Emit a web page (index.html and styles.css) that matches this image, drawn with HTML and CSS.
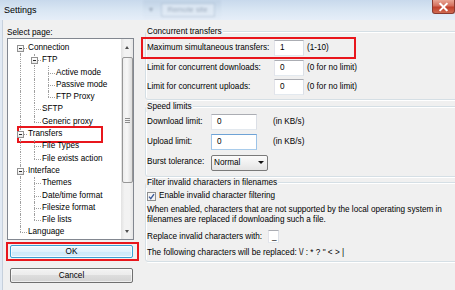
FILE: index.html
```html
<!DOCTYPE html>
<html>
<head>
<meta charset="utf-8">
<link rel="stylesheet" href="styles.css">
</head>
<body>
<div class="titlebar">
  <span class="title">Settings</span>
  <div class="ghost"><span class="gsep">▾</span><span class="gtab">Remote site</span></div>
  <div class="close"><svg width="23" height="14" viewBox="0 0 23 14"><path d="M8 3.5 L15 10.5 M15 3.5 L8 10.5" stroke="#fff" stroke-width="2.2" stroke-linecap="square"/></svg></div>
</div>
<div class="main">
  <div class="left">
    <div class="sel-label">Select page:</div>
    <div class="tree">
      <div class="rows">
        <div class="row"><i class="c f"><b class="box"></b></i><span class="tx">Connection</span></div>
        <div class="row"><i class="c v"></i><i class="c m"><b class="box"></b></i><span class="tx">FTP</span></div>
        <div class="row"><i class="c v"></i><i class="c v"></i><i class="c t"></i><span class="tx">Active mode</span></div>
        <div class="row"><i class="c v"></i><i class="c v"></i><i class="c t"></i><span class="tx">Passive mode</span></div>
        <div class="row"><i class="c v"></i><i class="c v"></i><i class="c l"></i><span class="tx">FTP Proxy</span></div>
        <div class="row"><i class="c v"></i><i class="c t"></i><span class="tx">SFTP</span></div>
        <div class="row"><i class="c v"></i><i class="c l"></i><span class="tx">Generic proxy</span></div>
        <div class="row"><i class="c m"><b class="box"></b></i><span class="tx">Transfers</span><span class="mark mark-tree"></span></div>
        <div class="row"><i class="c v"></i><i class="c t"></i><span class="tx">File Types</span></div>
        <div class="row"><i class="c v"></i><i class="c l"></i><span class="tx">File exists action</span></div>
        <div class="row"><i class="c m"><b class="box"></b></i><span class="tx">Interface</span></div>
        <div class="row"><i class="c v"></i><i class="c t"></i><span class="tx">Themes</span></div>
        <div class="row"><i class="c v"></i><i class="c t"></i><span class="tx">Date/time format</span></div>
        <div class="row"><i class="c v"></i><i class="c t"></i><span class="tx">Filesize format</span></div>
        <div class="row"><i class="c v"></i><i class="c l"></i><span class="tx">File lists</span></div>
        <div class="row"><i class="c l"></i><span class="tx">Language</span></div>
      </div>
      <div class="sb">
        <div class="sb-btn"><span class="tri-up"></span></div>
        <div class="track"><div class="thumb"><span class="grip"></span></div></div>
        <div class="sb-btn sb-down"><span class="tri-down"></span></div>
      </div>
    </div>
    <div class="okwrap"><div class="btn ok">OK</div></div>
    <div class="btn cancel">Cancel</div>
  </div>

  <div class="right">
    <div class="grp g1">
      <div class="legend">Concurrent transfers</div>
      <div class="frows">
        <div class="frow"><span class="lab">Maximum simultaneous transfers:</span><span class="inp w30">1</span><span class="note">(1-10)</span><span class="mark mark-row"></span></div>
        <div class="frow"><span class="lab">Limit for concurrent downloads:</span><span class="inp w30">0</span><span class="note">(0 for no limit)</span></div>
        <div class="frow"><span class="lab">Limit for concurrent uploads:</span><span class="inp w30">0</span><span class="note">(0 for no limit)</span></div>
      </div>
    </div>

    <div class="grp g2">
      <div class="legend">Speed limits</div>
      <div class="frows">
        <div class="frow"><span class="lab">Download limit:</span><span class="inp w46">0</span><span class="note">(in KB/s)</span></div>
        <div class="frow"><span class="lab">Upload limit:</span><span class="inp w46 focus">0</span><span class="note">(in KB/s)</span></div>
        <div class="frow"><span class="lab">Burst tolerance:</span><span class="sel"><span>Normal</span><span class="tri-down dark"></span></span></div>
      </div>
    </div>

    <div class="grp g3">
      <div class="legend">Filter invalid characters in filenames</div>
      <div class="chkrow">
        <svg class="chk" width="9" height="9" viewBox="0 0 9 9"><rect x="0.5" y="0.5" width="8" height="8" fill="#f4f4f4" stroke="#8e8f8f"/><path d="M2 4.6 L3.8 6.6 L7 2.2" fill="none" stroke="#3b5a9a" stroke-width="1.4"/></svg>
        <span class="chklab">Enable invalid character filtering</span>
      </div>
      <p class="para">When enabled, characters that are not supported by the local operating system in<br>filenames are replaced if downloading such a file.</p>
      <div class="reprow"><span class="lab3">Replace invalid characters with:</span><span class="inp small">_</span></div>
      <div class="lastline">The following characters will be replaced: \/ : * ? " &lt; &gt; |</div>
    </div>
  </div>
</div>
</body>
</html>
```

FILE: styles.css
```css
* { box-sizing: border-box; }
html, body { margin: 0; padding: 0; }
body {
  width: 455px;
  height: 290px;
  overflow: hidden;
  background: #f0f0f0;
  font-family: "Liberation Sans", Arial, sans-serif;
  font-size: 8.2px;
  line-height: 10px;
  color: #000;
}

/* title bar */
.titlebar {
  height: 20px;
  display: flex;
  align-items: center;
  background: linear-gradient(#c8d9ec, #d9e6f3 50%, #e6eef8);
}
.title { font-size: 9px; margin-left: 4px; }
.ghost {
  margin-left: 106px;
  align-self: stretch;
  display: flex;
  align-items: center;
  gap: 8px;
  padding: 0 6px;
  color: #6a7a90;
  font-size: 7.5px;
  opacity: 0.55;
  filter: blur(0.9px);
  background: linear-gradient(#b8cbe0, #d6e3f1 60%, transparent);
}
.gtab {
  border: 1px solid #9fb2c8;
  padding: 1px 6px;
  background: #e2ebf5;
}
.close {
  margin-left: auto;
  align-self: flex-start;
  width: 23px;
  height: 14px;
  border: 1px solid #8a3a30;
  border-top: none;
  border-radius: 0 0 3px 3px;
  background: linear-gradient(#e9a695, #d4705e 45%, #c0402c 55%, #d06a50);
  display: flex;
  align-items: center;
  justify-content: center;
}
.close svg { display: block; }

/* main */
.main {
  display: flex;
  height: 270px;
  box-shadow: inset 2px 0 0 #e2eaf4, inset 3px 0 0 #c6d0dc;
}
.left {
  width: 140px;
  flex: none;
  padding-left: 7px;
  display: flex;
  flex-direction: column;
}
.sel-label { margin-top: 8px; height: 10px; }

.tree {
  width: 127px;
  height: 202px;
  border: 1px solid #828790;
  background: #fff;
  display: flex;
}
.rows {
  flex: 1;
  padding: 2.8px 0 0 5px;
}
.row {
  height: 12.3px;
  display: flex;
  position: relative;
  white-space: nowrap;
}
.tx { margin-left: 1px; align-self: center; line-height: 10px; }

.c { width: 14px; flex: none; position: relative; }
.c::before, .c::after { content: ""; position: absolute; }
.c.v::before, .c.t::before, .c.m::before {
  left: 7px; top: 0; bottom: 0; border-left: 1px dotted #a0a0a0;
}
.c.l::before { left: 7px; top: 0; height: 50%; border-left: 1px dotted #a0a0a0; }
.c.f::before { left: 7px; top: 50%; bottom: 0; border-left: 1px dotted #a0a0a0; }
.c.t::after, .c.l::after, .c.f::after, .c.m::after {
  left: 7px; right: 0; top: 50%; border-top: 1px dotted #a0a0a0;
}
.box {
  position: absolute;
  left: 4px;
  top: calc(50% - 3px);
  width: 7px;
  height: 7px;
  border: 1px solid #919191;
  background: linear-gradient(#ffffff, #e9e9e9);
  z-index: 1;
}
.box::after {
  content: "";
  position: absolute;
  left: 1px; right: 1px; top: 2px;
  height: 1px;
  background: #2a2a2a;
}

.mark { position: absolute; border: 2px solid #e8161c; pointer-events: none; }
.mark-tree { left: 4px; top: -2px; width: 86px; height: 17px; }
.mark-row { left: -6px; top: -3px; width: 215px; height: 22px; }

/* scrollbar */
.sb {
  width: 12px;
  flex: none;
  display: flex;
  flex-direction: column;
  background: linear-gradient(to right, #e2e2e2, #f2f2f2 30%, #f2f2f2 70%, #e6e6e6);
}
.sb-btn { height: 17px; display: flex; align-items: center; justify-content: center; }
.sb-down { height: 15px; }
.tri-up {
  width: 0; height: 0;
  border-left: 2.5px solid transparent;
  border-right: 2.5px solid transparent;
  border-bottom: 3px solid #505050;
}
.tri-down {
  width: 0; height: 0;
  border-left: 2.5px solid transparent;
  border-right: 2.5px solid transparent;
  border-top: 3px solid #505050;
}
.track { flex: 1; display: flex; flex-direction: column; }
.thumb {
  margin: 1px 0.5px 0;
  height: 126px;
  border: 1px solid #979797;
  border-radius: 2px;
  background: linear-gradient(to right, #ededed, #f7f7f7 45%, #dcdcdc);
  display: flex;
  align-items: center;
  justify-content: center;
}
.grip {
  width: 5px;
  height: 5px;
  background: repeating-linear-gradient(#8c8c8c 0 1px, transparent 1px 2px);
}

/* buttons */
.okwrap {
  margin-top: 2px;
  margin-left: -1px;
  width: 133px;
  height: 19px;
  border: 2px solid #e8161c;
  padding: 1px 0 0 2px;
}
.btn {
  display: flex;
  align-items: center;
  justify-content: center;
  border-radius: 2px;
}
.ok {
  width: 123px;
  height: 13px;
  border: 1px solid #3b9fd3;
  background: linear-gradient(#eef8fe, #dff1fc 50%, #cbe8f9 50%, #d6edfa);
  box-shadow: inset 0 0 0 1px rgba(255,255,255,0.7);
}
.cancel {
  margin-top: 7px;
  margin-left: 3px;
  width: 123px;
  height: 15px;
  border: 1px solid #707070;
  background: linear-gradient(#f3f3f3, #ebebeb 50%, #dddddd 50%, #d3d3d3);
  box-shadow: inset 0 0 0 1px rgba(255,255,255,0.6);
}

/* right panel */
.right {
  flex: 1;
  min-width: 0;
  padding-left: 5px;
}
.grp {
  width: 313px;
  border: 1px solid #d5dfe5;
  border-radius: 3px;
  box-shadow: inset 1px 1px 0 #fff, 1px 1px 0 #fff;
  padding: 0 0 0 1px;
  white-space: nowrap;
}
.legend {
  width: fit-content;
  margin-top: -5px;
  height: 10px;
  padding: 0 1px;
  margin-left: -1px;
  background: #f0f0f0;
  position: relative;
}
.frows { display: flex; flex-direction: column; }
.frow { display: flex; align-items: center; height: 16px; position: relative; }

.g1 { margin-top: 11px; padding-bottom: 4px; }
.g1 .frows { margin-top: 3px; gap: 3.5px; }
.g1 .lab { width: 127px; }
.g1 .note { margin-left: 3px; }

.g2 { margin-top: 6px; padding-bottom: 6px; }
.g2 .frows { margin-top: 2px; gap: 4px; }
.g2 .lab { width: 64px; }
.g2 .note { margin-left: 16px; }

.inp {
  height: 16px;
  background: #fff;
  border: 1px solid;
  border-color: #abadb3 #dbdfe6 #e3e9ef #e2e3ea;
  padding-left: 5px;
  display: flex;
  align-items: center;
}
.inp.focus { border-color: #6fa3d6 #9cc3e8 #a9cceb #9cc3e8; }
.w30 { width: 30px; }
.w46 { width: 46px; }
.sel {
  width: 57px;
  height: 16px;
  margin-top: 1px;
  border: 1px solid #7a7a7a;
  border-radius: 2px;
  background: linear-gradient(#fbfbfb, #f0f0f0 50%, #e4e4e4);
  padding: 0 3px 0 2px;
  display: flex;
  align-items: center;
  justify-content: space-between;
}
.tri-down.dark { border-top-color: #111; border-left-width: 3px; border-right-width: 3px; }

.g3 { margin-top: 5px; padding-bottom: 3px; }
.chkrow { margin-top: 2px; height: 12px; display: flex; align-items: center; }
.chk { display: block; flex: none; }
.chklab { margin-left: 3px; }
.para { margin: 3px 0 0; line-height: 9.5px; }
.reprow { margin-top: 6px; height: 13px; display: flex; align-items: center; }
.lab3 { width: 121px; }
.inp.small { width: 11px; height: 13px; padding-left: 3px; }
.lastline { margin-top: 5px; height: 10px; }
```
